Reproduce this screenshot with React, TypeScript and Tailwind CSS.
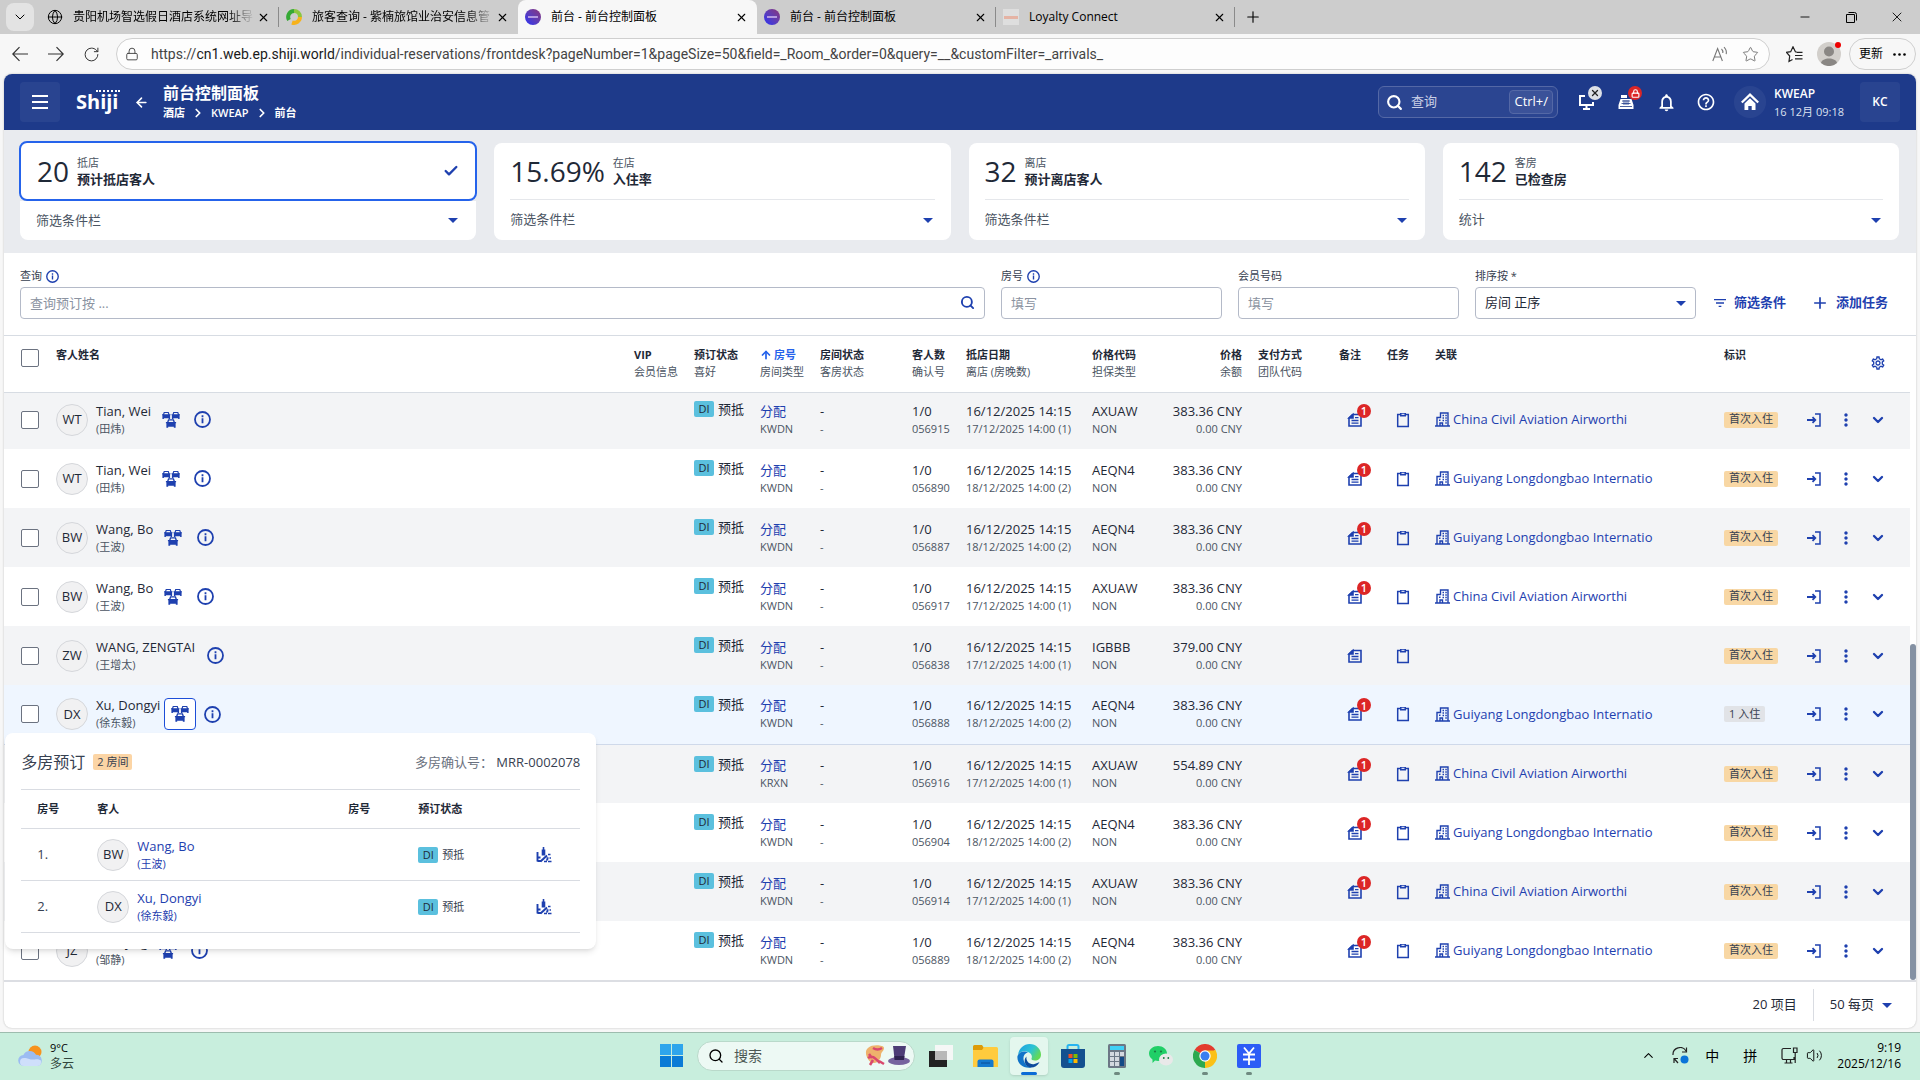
import type { ReactNode } from "react";
import { MdFilterList, MdAdd, MdHelpOutline, MdMoreVert, MdNotificationsNone, MdOutlineSettings } from "react-icons/md";
import {
  ArrowLeft,
  ArrowUp,
  Check,
  ChevronDown,
  ChevronRight,
  ChevronUp,
  Globe,
  Lock,
  Minus,
  Plus,
  RotateCw,
  Search,
  Star,
  Volume2,
  X,
} from "lucide-react";

/* ---------- icons ---------- */

const Caret = () => (
  <svg width="10" height="5" viewBox="0 0 10 5" className="shrink-0 fill-[#1e40af]">
    <path d="M0 0h10L5 5z" />
  </svg>
);

const InfoIcon = ({ size }: { size: number }) => (
  <svg width={size} height={size} viewBox="0 0 17 17" fill="none" className="shrink-0 stroke-[#1e40af]" strokeWidth="1.8">
    <circle cx="8.5" cy="8.5" r="7.5" />
    <path d="M8.5 7.3v5M8.5 4.3v1.9" />
  </svg>
);

const CarShape = ({ transform }: { transform: string }) => (
  <path
    transform={transform}
    fillRule="evenodd"
    d="M1.800 0h4.900l.8 2.200h1v1.100h-.4V7H6.600V6.200H1.900V7H.4V3.300H0V2.200h1zM2.700 1l-.5 1.300h4.100L5.800 1z"
  />
);

const CarsIcon = () => (
  <svg width="18" height="16" viewBox="0 0 18 16" className="fill-[#1e40af]">
    <CarShape transform="translate(0 0)" />
    <CarShape transform="translate(9.500 0)" />
    <CarShape transform="translate(3.900 7.300) scale(1.200)" />
  </svg>
);

const NotesIcon = () => (
  <svg width="16" height="16" viewBox="0 0 16 16" fill="none" className="stroke-[#1e40af]" strokeWidth="1.600">
    <path d="M5.500 2.500H14v11.500H2V6z" />
    <path d="M6 2.500v3.500H2z" className="fill-[#1e40af]" />
    <path d="M4.500 8.500h7M4.500 11.200h7M8 5.700h3.500" strokeWidth="1.300" />
  </svg>
);

const ClipboardIcon = () => (
  <svg width="16" height="16" viewBox="0 0 16 16" fill="none" className="stroke-[#1e40af]" strokeWidth="1.500">
    <path d="M2.700 2.500h10.600v12H2.700z" />
    <path d="M5 1h6v3.500H5z" className="fill-[#1e40af]" stroke="none" />
    <path d="M6.500 2.300h3" className="stroke-white" strokeWidth="1" />
  </svg>
);

const CompanyIcon = () => (
  <svg width="15" height="15" viewBox="0 0 15 15" fill="none" className="shrink-0 stroke-[#1e40af]" strokeWidth="1.400">
    <path d="M0 14h15M2 14V5.500h3.500V1H13v13M5 14v-3h2.500v3" />
    <path d="M7.500 3.500h1.500M10.300 3.500h1.500M7.500 6h1.500M10.300 6h1.500M4 8.300h1.500M7.500 8.500h1.500M10.300 8.500h1.500M10.300 11h1.500" />
  </svg>
);

const CheckInIcon = () => (
  <svg width="16" height="16" viewBox="0 0 16 16" fill="none" className="stroke-[#1e40af]" strokeWidth="1.500">
    <path d="M9 2h5v12H9" />
    <path d="M1 8h8M6.500 5.200 9.300 8l-2.800 2.800" strokeWidth="1.800" />
  </svg>
);

const SeatIcon = () => (
  <svg width="16" height="16" viewBox="0 0 16 16" fill="none" className="stroke-[#1e40af]" strokeWidth="1.600">
    <path d="M7.500 0v3" />
    <path d="M7.500 2.500v6" strokeWidth="3.600" />
    <path d="M1.500 5v9.500M1.500 10.500h3M1.500 14h3.500" strokeWidth="1.900" />
    <path d="M4.500 14.500 11 8.500" strokeWidth="2" />
    <path d="M12 7.500h2.500M10.500 11h2M13.500 11h1.500M8 14.500h3M12 14.500h3.500M10.500 13.500l1.500-2" />
  </svg>
);

const WeatherIcon = () => (
  <svg width="26" height="22" viewBox="0 0 26 22">
    <circle cx="17" cy="7" r="6.500" fill="#f7931e" />
    <path d="M6 21a5.500 5.500 0 0 1-.6-11A7 7 0 0 1 18 9.800a5.700 5.700 0 0 1 1.500 11.200z" fill="#9cbcf2" />
    <path d="M6 21a4 4 0 0 1 0-8c4 0 5 1.500 8 1.500 4 0 6-1 9 1a4 4 0 0 1-3.500 5.500z" fill="#cfdffb" />
  </svg>
);

const EdgeLogo = () => (
  <svg width="24" height="24" viewBox="0 0 24 24">
    <defs>
      <linearGradient id="edgeTop" x1="0" y1="0" x2="1" y2="0.500">
        <stop offset="0" stopColor="#1b9de2" />
        <stop offset="0.600" stopColor="#2cc3d5" />
        <stop offset="1" stopColor="#62d957" />
      </linearGradient>
    </defs>
    <path d="M1 11C2 4 7 0 12.500 0 19 0 24 5 24 10.500c0 4-3 6-6 6-2.500 0-4-1-3.500-2 .8-1.500.5-4.500-2.500-6C8 6.500 3 7 1 11z" fill="url(#edgeTop)" />
    <path d="M.5 12C2 7.500 7.500 6.500 11 8.200c-4 1.300-5.500 5-4 9 1.200 3.300 4 5.800 7.500 6.300C6 25-.5 19 .5 12z" fill="#1173c8" />
    <path d="M9.500 12.500c-1 5 3.500 8.500 8 7.500 2-.4 3.800-1.500 5-1.700-2 3.700-5.500 5.400-9 5.200-5-.8-8-7-4-11z" fill="#0c4a9c" />
  </svg>
);

const ChromeLogo = () => (
  <svg width="24" height="24" viewBox="0 0 24 24">
    <path d="M12 12 1.600 6A12 12 0 0 1 22.400 6z" fill="#e33b2e" />
    <path d="M12 12 22.400 6A12 12 0 0 1 12 24z" fill="#fbc116" />
    <path d="M12 12v12A12 12 0 0 1 1.600 6z" fill="#2da94f" />
    <path d="M12 6.500h10.700L17 15z" fill="#fbc116" />
    <circle cx="12" cy="12" r="5.700" fill="#fff" />
    <circle cx="12" cy="12" r="4.500" fill="#3a7ef0" />
  </svg>
);

/* ---------- browser chrome ---------- */

const ShijiFavicon = () => (
  <span className="flex size-4 items-center justify-center rounded-full bg-linear-to-tr from-[#2429f5] to-[#8a2f78]">
    <span className="h-0.5 w-2.5 bg-[#b49ae0]" />
  </span>
);

type TabProps = { title: string; icon: ReactNode; active?: boolean; divider?: boolean; faded?: boolean };

const Tab = ({ title, icon, active, divider, faded }: TabProps) => (
  <div className={`flex h-full w-[239px] items-center pl-[7px] ${active ? "rounded-t-lg bg-[#f7f7f7]" : ""}`}>
    <span className="flex size-4 shrink-0 items-center justify-center">{icon}</span>
    <span className={`ml-2.5 w-[182px] text-xs whitespace-nowrap text-black ${faded ? "mask-r-from-85%" : ""}`}>{title}</span>
    <button aria-label="关闭标签页" className="flex size-4 shrink-0 items-center justify-center">
      <X size={13} strokeWidth={2} />
    </button>
    {divider && <span className="ml-auto h-5 w-px bg-[#8a8a8a]" />}
  </div>
);

const TabBar = () => (
  <div className="flex h-[34px] items-center bg-[#cdcdcd]">
    <button aria-label="标签页菜单" className="mr-1.5 ml-1.5 flex size-7 items-center justify-center rounded-lg bg-[#e3e3e3]">
      <ChevronDown size={16} strokeWidth={1.500} />
    </button>
    <Tab title="贵阳机场智选假日酒店系统网址导" icon={<Globe size={16} strokeWidth={1.500} />} divider faded />
    <Tab
      title="旅客查询 - 紫楠旅馆业治安信息管"
      icon={
        <svg width="16" height="16" viewBox="0 0 16 16" fill="none" strokeWidth="4">
          <path d="M3 11A6 6 0 0 1 8 2" stroke="#35a935" />
          <path d="M8 2a6 6 0 0 1 6 6" stroke="#8cc63f" />
          <path d="M14 8a6 6 0 0 1-8 5.500" stroke="#f7b21b" />
        </svg>
      }
      faded
    />
    <Tab title="前台 - 前台控制面板" icon={<ShijiFavicon />} active />
    <Tab title="前台 - 前台控制面板" icon={<ShijiFavicon />} divider />
    <Tab
      title="Loyalty Connect"
      icon={
        <span className="flex size-4 items-center justify-center bg-[#dedede]">
          <span className="h-[3px] w-3.5 bg-[#e5b3a4]" />
        </span>
      }
      divider
    />
    <button aria-label="新建标签页" className="ml-1.5 flex size-6 items-center justify-center">
      <Plus size={18} strokeWidth={1.500} />
    </button>
    <div className="ml-auto flex">
      <button aria-label="最小化" className="flex w-[46px] items-center justify-center">
        <Minus size={14} strokeWidth={1.500} />
      </button>
      <button aria-label="还原" className="flex w-[46px] items-center justify-center">
        <svg width="11" height="11" viewBox="0 0 11 11" fill="none" stroke="#000">
          <path d="M.5 2.500h8v8h-8zM2.500.5h6a2 2 0 0 1 2 2v6" />
        </svg>
      </button>
      <button aria-label="关闭" className="flex w-[46px] items-center justify-center">
        <X size={16} strokeWidth={1.300} />
      </button>
    </div>
  </div>
);

const AddressBar = () => (
  <div className="flex h-10 items-center bg-[#f7f7f7] pr-1">
    <div className="flex w-28 items-center justify-between pr-3 pl-3 text-[#333]">
      <button aria-label="后退">
        <svg width="16" height="16" viewBox="0 0 16 16" fill="none" stroke="currentColor" strokeWidth="1.200">
          <path d="M16 8H.8M7.500 1.200.8 8l6.700 6.800" />
        </svg>
      </button>
      <button aria-label="前进">
        <svg width="16" height="16" viewBox="0 0 16 16" fill="none" stroke="currentColor" strokeWidth="1.200">
          <path d="M0 8h15.200M8.500 1.200 15.200 8l-6.700 6.800" />
        </svg>
      </button>
      <button aria-label="刷新">
        <RotateCw size={17} strokeWidth={1.400} />
      </button>
    </div>
    <div className="ml-1 flex h-8 flex-1 items-center rounded-full border border-[#cfcfcf] bg-[#fdfdfd] pr-2.5 pl-2 text-[#444]">
      <Lock size={14} strokeWidth={1.600} className="mr-3 shrink-0" />
      <p className="flex-1 font-[Roboto,sans-serif] text-sm">
        https://<span className="text-[#1a1a1a]">cn1.web.ep.shiji.world</span>
        /individual-reservations/frontdesk?pageNumber=1&pageSize=50&field=_Room_&order=0&query=__&customFilter=_arrivals_
      </p>
      <button aria-label="大声朗读" className="mr-3.5">
        <svg width="16" height="16" viewBox="0 0 16 16" fill="none" stroke="#777" strokeWidth="1.100">
          <path d="M.8 15 5.600 2.500 10.400 15M2.400 11h6.400M9.500 3a4.500 4.500 0 0 1 1.300 4M12 1.200a7.500 7.500 0 0 1 2.200 7" />
        </svg>
      </button>
      <button aria-label="收藏">
        <Star size={17} strokeWidth={1.200} className="text-[#666]" />
      </button>
    </div>
    <button aria-label="收藏夹" className="ml-4">
      <svg width="17" height="17" viewBox="0 0 17 17" fill="none" stroke="#222" strokeWidth="1.200">
        <path d="M11 6.200 9.400 5.700 7 .8 4.700 5.700l-4.200.6L3.700 10 3 15.500l3.500-2M9 9.500h7.500M11 6.300h5.500M9 12.800h7.500" />
      </svg>
    </button>
    <button aria-label="个人资料" className="relative ml-3.5 size-6">
      <svg width="24" height="24" viewBox="0 0 24 24">
        <circle cx="12" cy="12" r="12" fill="#d2cfcb" />
        <circle cx="12" cy="9.500" r="5" fill="#8a8784" />
        <path d="M4 21c1-6 15-6 16 0a12 12 0 0 1-16 0z" fill="#8a8784" />
      </svg>
      <span className="absolute top-0 right-0 size-1.5 rounded-full bg-[#e00]" />
    </button>
    <button className="ml-2 flex h-8 items-center gap-2.5 rounded-full border border-[#cfcfcf] px-[9px] text-xs text-black">
      更新
      <svg width="13" height="3" viewBox="0 0 13 3">
        <circle cx="1.500" cy="1.500" r="1.300" />
        <circle cx="6.500" cy="1.500" r="1.300" />
        <circle cx="11.500" cy="1.500" r="1.300" />
      </svg>
    </button>
  </div>
);

/* ---------- app header ---------- */

const AppHeader = () => (
  <header className="flex h-14 items-center rounded-t-lg bg-[#1e3a8a] px-4 text-white">
    <button aria-label="菜单" className="flex size-10 items-center justify-center rounded bg-white/5">
      <svg width="16" height="14" viewBox="0 0 16 14" fill="#fff">
        <path d="M0 0h16v2H0zM0 6h16v2H0zM0 12h16v2H0z" />
      </svg>
    </button>
    <a href="#home" className="relative ml-4 w-12 text-xl leading-6 font-bold">
      Shiji
      <span className="absolute top-0 left-5 w-6 border-t-2 border-dotted border-white" />
    </a>
    <button aria-label="返回" className="ml-2.5">
      <ArrowLeft size={15} strokeWidth={2.500} />
    </button>
    <div className="ml-3.5">
      <h1 className="text-base leading-[22px] font-bold">前台控制面板</h1>
      <nav className="flex items-center gap-1.5 text-[11px] leading-[18px] font-semibold">
        <a href="#hotel">酒店</a>
        <ChevronRight size={14} strokeWidth={3} />
        <a href="#kweap">KWEAP</a>
        <ChevronRight size={14} strokeWidth={3} />
        <a href="#frontdesk">前台</a>
      </nav>
    </div>
    <label className="ml-auto flex h-8 w-[180px] items-center rounded-md border border-[#5468a6] bg-[#2b4591] pr-1 pl-[7px]">
      <Search size={17} strokeWidth={3} />
      <input aria-label="查询" placeholder="查询" className="ml-2 w-0 flex-1 text-[13px] placeholder-[#c9d0e6] outline-none" />
      <kbd className="flex h-6 items-center rounded border border-[#5468a6] bg-[#3b5299] px-1 font-[inherit] text-[13px]">Ctrl+/</kbd>
    </label>
    <div className="ml-4 flex items-center gap-4">
      <button aria-label="终端" className="relative flex size-6 items-center justify-center">
        <svg width="18" height="18" viewBox="0 0 18 18" fill="none" stroke="#fff" strokeWidth="2">
          <path d="M8 3H3v9h13v-3M9.500 12v4M6 16h7" />
        </svg>
        <span className="absolute -top-1 left-3.5 flex size-3.5 items-center justify-center rounded-full bg-[#dde0e6] text-[#222]">
          <X size={10} strokeWidth={3} />
        </span>
      </button>
      <button aria-label="收银" className="relative flex size-6 items-center justify-center">
        <svg width="16" height="16" viewBox="0 0 16 16">
          <path d="M3 1h6v3H3zM2.500 5h11L15.500 11v4H.5v-4z" fill="#fff" />
          <path d="M4 7h8M3.500 9.500h9M6 6v5M8 6v5M10 6v5M2 12.500h12" stroke="#1e3a8a" strokeWidth=".8" />
        </svg>
        <span className="absolute -top-1 left-3.5 flex size-3.5 items-center justify-center rounded-full bg-[#dc2626]">
          <Lock size={9} strokeWidth={3} />
        </span>
      </button>
      <button aria-label="通知" className="flex size-6 items-center justify-center">
        <MdNotificationsNone size={21} />
      </button>
      <button aria-label="帮助" className="flex size-6 items-center justify-center">
        <MdHelpOutline size={20} />
      </button>
    </div>
    <div className="ml-4 flex items-center gap-2">
      <span className="flex size-8 items-center justify-center rounded-full bg-white/5">
        <svg width="18" height="18" viewBox="0 0 18 18">
          <path d="M9 0 18 8.700l-1.600 1.600L9 3.200l-7.400 7.100L0 8.700zM9 5.300l5.500 5.200V17h-3.800v-4H7.300v4H3.500v-6.500z" fill="#fff" />
        </svg>
      </span>
      <div className="pt-0.5">
        <p className="text-xs leading-[18px] font-semibold">KWEAP</p>
        <p className="text-[11px] leading-[18px] text-[#dbe1f0]">16 12月 09:18</p>
      </div>
    </div>
    <button className="ml-4 size-10 rounded bg-white/5 text-xs font-semibold">KC</button>
  </header>
);

/* ---------- summary cards ---------- */

const cards = [
  { value: "20", label: "抵店", title: "预计抵店客人", footer: "筛选条件栏", selected: true },
  { value: "15.69%", label: "在店", title: "入住率", footer: "筛选条件栏" },
  { value: "32", label: "离店", title: "预计离店客人", footer: "筛选条件栏" },
  { value: "142", label: "客房", title: "已检查房", footer: "统计" },
];

const Cards = () => (
  <section className="grid grid-cols-4 gap-[18px] bg-[#e9ebef] pt-[11px] pr-[17px] pb-[13px] pl-4">
    {cards.map((card) => (
      <div key={card.value} className={`flex flex-col ${card.selected ? "" : "pt-0.5"}`}>
        <button
          className={`flex items-center bg-white text-left ${
            card.selected ? "-mx-px h-[60px] rounded-lg border-2 border-[#2563eb] pr-4 pl-4" : "h-14 rounded-t-lg px-4"
          }`}
        >
          <span className="text-[28px] leading-8 text-[#1f2937]">{card.value}</span>
          <span className="ml-2 flex flex-col">
            <span className="text-[11px] leading-[17px] text-[#4b5563]">{card.label}</span>
            <span className="text-[13px] leading-[17px] font-bold text-[#1f2937]">{card.title}</span>
          </span>
          {card.selected && <Check size={16} strokeWidth={3.500} className="ml-auto text-[#1e40af]" />}
        </button>
        <div className="flex-1 rounded-b-lg bg-white px-4">
          <button
            className={`flex w-full items-center justify-between pr-0.5 text-[13px] text-[#4b5563] ${
              card.selected ? "h-[39px]" : "h-[41px] border-t border-[#e5e7eb]"
            }`}
          >
            {card.footer}
            <Caret />
          </button>
        </div>
      </div>
    ))}
  </section>
);

/* ---------- filters ---------- */

const fieldLabel = "flex h-[18px] items-center gap-1 text-[11px] text-[#374151]";
const fieldBox = "mt-0.5 h-8 w-full rounded border border-[#b4bac8] bg-white px-[9px] text-[13px] text-[#1f2937] placeholder-[#8b93a1]";

const Filters = () => (
  <section className="flex items-end px-4 pt-3.5 pb-4">
    <div className="flex-1">
      <label htmlFor="query" className={fieldLabel}>
        查询 <InfoIcon size={13} />
      </label>
      <div className="relative">
        <input id="query" placeholder="查询预订按 ..." className={fieldBox} />
        <Search size={15} strokeWidth={3} className="absolute top-2.5 right-2.5 text-[#1e40af]" />
      </div>
    </div>
    <div className="ml-4 w-[221px]">
      <label htmlFor="room" className={fieldLabel}>
        房号 <InfoIcon size={13} />
      </label>
      <input id="room" placeholder="填写" className={fieldBox} />
    </div>
    <div className="ml-4 w-[221px]">
      <label htmlFor="member" className={fieldLabel}>
        会员号码
      </label>
      <input id="member" placeholder="填写" className={fieldBox} />
    </div>
    <div className="ml-4 w-[221px]">
      <label htmlFor="sort" className={fieldLabel}>
        排序按 *
      </label>
      <div className="relative">
        <select id="sort" className={`${fieldBox} appearance-none`}>
          <option>房间 正序</option>
          <option>房间 倒序</option>
        </select>
        <span className="pointer-events-none absolute top-4 right-2.5">
          <Caret />
        </span>
      </div>
    </div>
    <button className="ml-4 flex h-8 items-center gap-1.5 text-[13px] font-bold text-[#1e40af]">
      <MdFilterList size={16} />
      筛选条件
    </button>
    <button className="mr-3 ml-6 flex h-8 items-center gap-1.5 text-[13px] font-bold text-[#1e40af]">
      <MdAdd size={20} />
      添加任务
    </button>
  </section>
);

/* ---------- reservations table ---------- */

type Reservation = {
  initials?: string;
  name?: string;
  localName?: string;
  single?: boolean;
  open?: boolean;
  roomType?: string;
  confirmation: string;
  departure: string;
  rate: string;
  price?: string;
  company?: string;
  stays?: string;
};

const CAAC = "China Civil Aviation Airworthi";
const GLIA = "Guiyang Longdongbao Internatio";
const ONE_NIGHT = "17/12/2025 14:00 (1)";
const TWO_NIGHTS = "18/12/2025 14:00 (2)";

const reservations: Reservation[] = [
  { initials: "WT", name: "Tian, Wei", localName: "田炜", confirmation: "056915", departure: ONE_NIGHT, rate: "AXUAW", company: CAAC },
  { initials: "WT", name: "Tian, Wei", localName: "田炜", confirmation: "056890", departure: TWO_NIGHTS, rate: "AEQN4", company: GLIA },
  { initials: "BW", name: "Wang, Bo", localName: "王波", confirmation: "056887", departure: TWO_NIGHTS, rate: "AEQN4", company: GLIA },
  { initials: "BW", name: "Wang, Bo", localName: "王波", confirmation: "056917", departure: ONE_NIGHT, rate: "AXUAW", company: CAAC },
  { initials: "ZW", name: "WANG, ZENGTAI", localName: "王增太", single: true, confirmation: "056838", departure: ONE_NIGHT, rate: "IGBBB", price: "379.00" },
  { initials: "DX", name: "Xu, Dongyi", localName: "徐东毅", open: true, confirmation: "056888", departure: TWO_NIGHTS, rate: "AEQN4", company: GLIA, stays: "1 入住" },
  { confirmation: "056916", departure: ONE_NIGHT, rate: "AXUAW", company: CAAC, roomType: "KRXN", price: "554.89" },
  { confirmation: "056904", departure: TWO_NIGHTS, rate: "AEQN4", company: GLIA },
  { confirmation: "056914", departure: ONE_NIGHT, rate: "AXUAW", company: CAAC },
  { initials: "JZ", name: "Zou, Jing", localName: "邹静", confirmation: "056889", departure: TWO_NIGHTS, rate: "AEQN4", company: GLIA },
];

const Avatar = ({ children }: { children: ReactNode }) => (
  <span className="flex size-8 shrink-0 items-center justify-center rounded-full border border-[#d5d7db] bg-[#f1f1f2] text-[13px] text-[#1f2937]">
    {children}
  </span>
);

const Checkbox = ({ label }: { label: string }) => (
  <input
    type="checkbox"
    aria-label={label}
    className="block size-[18px] appearance-none rounded-xs border border-[#6b7280] bg-white"
  />
);

const StatusChip = () => (
  <span className="flex h-4 w-5 items-center justify-center rounded-xs bg-[#5bc0de] text-[11px] text-[#1f2937]">DI</span>
);

const TwoLines = ({ top, bottom }: { top: ReactNode; bottom: ReactNode }) => (
  <>
    <p className="text-[13px] leading-[18px] text-[#1f2937]">{top}</p>
    <p className="text-[11px] leading-[18px] text-[#4b5563]">{bottom}</p>
  </>
);

const HeadCell = ({ top, bottom, className = "" }: { top: ReactNode; bottom?: string; className?: string }) => (
  <th className={`bg-white pt-2.5 text-left align-top text-[11px] leading-[17px] whitespace-nowrap ${className}`}>
    <p className="font-bold text-[#1f2937]">{top}</p>
    {bottom && <p className="font-normal text-[#4b5563]">{bottom}</p>}
  </th>
);

const groupGuests = [
  { no: "1.", initials: "BW", name: "Wang, Bo", localName: "王波" },
  { no: "2.", initials: "DX", name: "Xu, Dongyi", localName: "徐东毅" },
];

const MultiRoomPopup = () => (
  <div className="absolute top-[35px] -left-[159px] z-20 w-[591px] rounded-lg bg-white px-4 pb-4 shadow-md">
    <div className="flex h-14 items-center pt-0.5">
      <h2 className="text-base text-[#374151]">多房预订</h2>
      <span className="ml-2 rounded-xs bg-[#fcd5a5] px-1 text-[11px] leading-4 text-[#374151]">2 房间</span>
      <p className="ml-auto text-[13px] text-[#6b7280]">
        多房确认号： <span className="text-[#374151]">MRR-0002078</span>
      </p>
    </div>
    <table className="w-full table-fixed border-t border-[#d9dce2] text-left">
      <thead>
        <tr className="h-[39px] border-b border-[#d9dce2] text-[11px] text-[#1f2937]">
          <th className="w-[76px] pl-4">房号</th>
          <th>客人</th>
          <th className="w-[70px]">房号</th>
          <th className="w-[118px]">预订状态</th>
          <th className="w-11" />
        </tr>
      </thead>
      <tbody>
        {groupGuests.map((guest) => (
          <tr key={guest.no} className="h-[52px] border-b border-[#d9dce2]">
            <td className="pl-4 text-[13px] text-[#374151]">{guest.no}</td>
            <td>
              <a href="#guest" className="flex items-center gap-2 text-[#1e40af]">
                <Avatar>{guest.initials}</Avatar>
                <span className="flex flex-col text-[13px] leading-[18px]">
                  {guest.name}
                  <span className="text-[11px]">({guest.localName})</span>
                </span>
              </a>
            </td>
            <td />
            <td>
              <span className="flex items-center gap-1 text-[11px] text-[#374151]">
                <StatusChip />
                预抵
              </span>
            </td>
            <td>
              <button aria-label="换房" className="flex">
                <SeatIcon />
              </button>
            </td>
          </tr>
        ))}
      </tbody>
    </table>
  </div>
);

const GuestCell = ({ row }: { row: Reservation }) => {
  if (!row.name) return null;
  return (
    <div className="flex items-center">
      <Avatar>{row.initials}</Avatar>
      <div className="mr-1 ml-2">
        <TwoLines top={row.name} bottom={`(${row.localName})`} />
      </div>
      {!row.single && (
        <div className="relative">
          <button
            aria-label="多房预订"
            className={`flex size-8 items-center justify-center rounded ${row.open ? "border border-[#1d4ed8] bg-white" : ""}`}
          >
            <CarsIcon />
          </button>
          {row.open && <MultiRoomPopup />}
        </div>
      )}
      <button aria-label="客人信息" className="flex size-8 items-center justify-center">
        <InfoIcon size={17} />
      </button>
    </div>
  );
};

const ReservationRow = ({ row }: { row: Reservation }) => (
  <tr className={`h-[59px] whitespace-nowrap ${row.open ? "border-b border-[#cfd9ea] bg-[#eff6ff]" : "odd:bg-[#f3f4f6] even:bg-white"}`}>
    <td className="pl-[17px]">
      <Checkbox label={`选择 ${row.confirmation}`} />
    </td>
    <td>
      <GuestCell row={row} />
    </td>
    <td />
    <td className="pt-[11px] align-top">
      <span className="flex items-center gap-1 text-[13px] leading-4 text-[#1f2937]">
        <StatusChip />
        预抵
      </span>
    </td>
    <td>
      <TwoLines top={<a href="#assign" className="text-[#1e40af]">分配</a>} bottom={row.roomType ?? "KWDN"} />
    </td>
    <td>
      <TwoLines top="-" bottom="-" />
    </td>
    <td>
      <TwoLines top="1/0" bottom={row.confirmation} />
    </td>
    <td>
      <TwoLines top="16/12/2025 14:15" bottom={row.departure} />
    </td>
    <td>
      <TwoLines top={row.rate} bottom="NON" />
    </td>
    <td className="pr-4 text-right">
      <TwoLines top={`${row.price ?? "383.36"} CNY`} bottom="0.00 CNY" />
    </td>
    <td />
    <td className="pl-2">
      <button aria-label="备注" className="relative flex">
        <NotesIcon />
        {row.company && (
          <span className="absolute -top-2 left-2.5 flex size-3.5 items-center justify-center rounded-full bg-[#dc2626] text-[11px] leading-none font-semibold text-white">
            1
          </span>
        )}
      </button>
    </td>
    <td className="pl-2">
      <button aria-label="任务" className="flex">
        <ClipboardIcon />
      </button>
    </td>
    <td>
      {row.company && (
        <a href="#company" className="flex items-center gap-[3px] text-[13px] text-[#1e40af]">
          <CompanyIcon />
          {row.company}
        </a>
      )}
    </td>
    <td>
      <span
        className={`flex h-4 w-fit items-center rounded-xs px-[5px] text-[11px] text-[#374151] ${
          row.stays ? "bg-[#e1e3e7]" : "bg-[#f8d7a4]"
        }`}
      >
        {row.stays ?? "首次入住"}
      </span>
    </td>
    <td>
      <div className="flex items-center justify-between pr-6 pl-0.5 text-[#1e40af]">
        <button aria-label="办理入住">
          <CheckInIcon />
        </button>
        <button aria-label="更多">
          <MdMoreVert size={20} />
        </button>
        <button aria-label="展开">
          <ChevronDown size={16} strokeWidth={3.500} />
        </button>
      </div>
    </td>
  </tr>
);

const ReservationTable = () => (
  <section className="flex border-t border-[#d7dce3]">
    <table className="w-full flex-1 table-fixed">
      <thead className="relative bg-white shadow-[0_2px_0_#ffffff,0_3px_0_#d7dce3]">
        <tr className="h-[54px]">
          <th className="w-[52px] bg-white pt-[13px] pl-[17px] align-top">
            <Checkbox label="全选" />
          </th>
          <HeadCell top="客人姓名" />
          <HeadCell top="VIP" bottom="会员信息" className="w-[60px]" />
          <HeadCell top="预订状态" bottom="喜好" className="w-[66px]" />
          <HeadCell
            top={
              <button className="flex items-center gap-0.5 text-[#2563eb]">
                <ArrowUp size={12} strokeWidth={3.500} />
                房号
              </button>
            }
            bottom="房间类型"
            className="w-[60px]"
          />
          <HeadCell top="房间状态" bottom="客房状态" className="w-[92px]" />
          <HeadCell top="客人数" bottom="确认号" className="w-[54px]" />
          <HeadCell top="抵店日期" bottom="离店 (房晚数)" className="w-[126px]" />
          <HeadCell top="价格代码" bottom="担保类型" className="w-[68px]" />
          <HeadCell top="价格" bottom="余额" className="w-[98px] pr-4 !text-right" />
          <HeadCell top="支付方式" bottom="团队代码" className="w-[81px]" />
          <HeadCell top="备注" className="w-12" />
          <HeadCell top="任务" className="w-12" />
          <HeadCell top="关联" className="w-[289px]" />
          <HeadCell top="标识" className="w-20" />
          <th className="w-[106px] bg-white pr-6 align-middle">
            <button aria-label="设置" className="ml-auto block text-[#1e40af]">
              <MdOutlineSettings size={16} />
            </button>
          </th>
        </tr>
      </thead>
      <tbody>
        {reservations.map((row) => (
          <ReservationRow key={row.confirmation} row={row} />
        ))}
      </tbody>
    </table>
    <div className="flex w-1.5 items-end">
      <div className="h-[336px] w-full rounded-full bg-[#8491a3]" />
    </div>
  </section>
);

const TableFooter = () => (
  <footer className="flex flex-1 items-center justify-end border-t-2 border-[#dcdee3] pr-6 text-[13px] text-[#1f2937]">
    <span>20 项目</span>
    <span className="mx-4 h-8 w-px bg-[#d9dce2]" />
    <button className="flex items-center gap-2">
      50 每页
      <Caret />
    </button>
  </footer>
);

/* ---------- windows taskbar ---------- */

const TaskItem = ({ label, active, running, children }: { label: string; active?: boolean; running?: boolean; children: ReactNode }) => (
  <button
    aria-label={label}
    className={`relative mx-[3px] flex h-[38px] w-[38px] items-center justify-center rounded ${active ? "bg-white/50 shadow-sm" : ""}`}
  >
    {children}
    {active && <span className="absolute bottom-0 h-[3px] w-4 rounded-full bg-[#0a6cd6]" />}
    {running && <span className="absolute bottom-0 h-[3px] w-1.5 rounded-full bg-[#6f8a80]" />}
  </button>
);

const Taskbar = () => (
  <div className="grid h-12 grid-cols-[1fr_auto_1fr] items-center border-t border-[#9dbcae] bg-[#c8eedd] pb-0.5 text-black">
    <button className="flex items-center gap-1.5 pl-[18px] text-left text-[11px] leading-4">
      <WeatherIcon />
      <span>
        9°C
        <br />
        <span className="text-xs text-[#33473e]">多云</span>
      </span>
    </button>
    <div className="flex items-center">
      <TaskItem label="开始">
        <svg width="23" height="23" viewBox="0 0 23 23">
          <path d="M0 0h11v11H0zM12 0h11v11H12z" fill="#2ea5ec" />
          <path d="M0 12h11v11H0zM12 12h11v11H12z" fill="#0a7bd6" />
        </svg>
      </TaskItem>
      <label className="mx-1 flex h-[30px] w-[218px] items-center rounded-full border border-[#b9d9ca] bg-[#edf9f4] pr-1 pl-2.5">
        <Search size={16} strokeWidth={2} />
        <input aria-label="搜索" placeholder="搜索" className="ml-2.5 w-0 flex-1 text-sm placeholder-[#4c5853] outline-none" />
        <svg width="46" height="22" viewBox="0 0 46 22">
          <path d="M4 3C8-1 20 0 20 3c0 3-3 4-3 7s-3 9-8 8S-1 7 4 3z" fill="#eeb26c" />
          <path d="M9 3c3 2 6 2 9 0M5 9l3 4M4 13c4-3 6-1 12 5M15 16l5 3M9 15 6 20" stroke="#d9486e" strokeWidth="2.500" fill="none" />
          <ellipse cx="35" cy="16" rx="11" ry="4" fill="#77639f" />
          <path d="M29 1h13l-2.300 14h-9z" fill="#4d3d76" />
          <path d="M30.300 11h10.200l-.6 4h-9.200z" fill="#2f2450" />
        </svg>
      </label>
      <TaskItem label="任务视图">
        <svg width="24" height="22" viewBox="0 0 24 22">
          <path d="M6 0h18v15H6z" fill="#f5f7f6" />
          <path d="M0 6h18v16H0z" fill="#222" />
          <path d="M6 6h12v9H6z" fill="#b8b8b8" />
        </svg>
      </TaskItem>
      <TaskItem label="文件资源管理器">
        <svg width="25" height="22" viewBox="0 0 25 22">
          <path d="M0 1.500A1.500 1.500 0 0 1 1.500 0H9l2 3v3H0z" fill="#dd9b08" />
          <path d="M0 5h9l2-3h12.500A1.500 1.500 0 0 1 25 3.500V22H0z" fill="#ffcb3d" />
          <path d="M4.500 22v-5.500a2 2 0 0 1 2-2h12a2 2 0 0 1 2 2V22z" fill="#1479cf" />
          <path d="M8 18h9" stroke="#0b4f96" />
        </svg>
      </TaskItem>
      <TaskItem label="Microsoft Edge" active>
        <EdgeLogo />
      </TaskItem>
      <TaskItem label="Microsoft Store">
        <svg width="24" height="24" viewBox="0 0 24 24">
          <path d="M6.500 6V2.500A1.500 1.500 0 0 1 8 1h8a1.500 1.500 0 0 1 1.500 1.500V6" fill="none" stroke="#27b4f0" strokeWidth="2" />
          <path d="M0 5h24v16a3 3 0 0 1-3 3H3a3 3 0 0 1-3-3z" fill="#14508f" />
          <path d="M7.500 10h4v4h-4z" fill="#f25022" />
          <path d="M12.500 10h4v4h-4z" fill="#7fba00" />
          <path d="M7.500 15h4v4h-4z" fill="#00a4ef" />
          <path d="M12.500 15h4v4h-4z" fill="#ffb900" />
        </svg>
      </TaskItem>
      <TaskItem label="计算器" running>
        <svg width="18" height="24" viewBox="0 0 18 24">
          <rect width="18" height="24" rx="1.500" fill="#6c7785" />
          <path d="M2 2h14v4H2z" fill="#3fd0f5" />
          <path d="M2 8h4v4H2zM7 8h4v4H7zM12 8h4v4h-4zM2 13h4v4H2zM7 13h4v4H7zM2 18h4v4H2zM7 18h4v4H7z" fill="#d3d8df" />
          <path d="M12 13h4v9h-4z" fill="#144a86" />
        </svg>
      </TaskItem>
      <TaskItem label="微信">
        <svg width="24" height="20" viewBox="0 0 24 20">
          <path d="M9 0c5 0 9 3.400 9 7.500S14 15 9 15c-1 0-2-.1-3-.4L3.500 17v-3.500C1.500 12 0 10 0 7.500 0 3.400 4 0 9 0z" fill="#21cf67" />
          <ellipse cx="17" cy="13.500" rx="7" ry="6" fill="#e9e9e9" />
          <g fill="#1b7c43">
            <circle cx="6" cy="5.500" r="1.100" />
            <circle cx="12" cy="5.500" r="1.100" />
            <circle cx="14.800" cy="12" r=".9" />
            <circle cx="19.300" cy="12" r=".9" />
          </g>
        </svg>
      </TaskItem>
      <TaskItem label="Google Chrome" running>
        <ChromeLogo />
      </TaskItem>
      <TaskItem label="收款" running>
        <svg width="24" height="24" viewBox="0 0 24 24">
          <rect width="24" height="24" rx="2" fill="#2c5cf6" />
          <path d="M7 3.500l5 6 5-6M12 9.500V21M6 10.500h12M6 15.500h12" fill="none" stroke="#fff" strokeWidth="1.800" />
        </svg>
      </TaskItem>
    </div>
    <div className="flex items-center justify-end pr-[19px]">
      <button aria-label="显示隐藏的图标">
        <ChevronUp size={15} strokeWidth={1.700} />
      </button>
      <button aria-label="同步" className="ml-4">
        <svg width="17" height="17" viewBox="0 0 17 17" fill="none" stroke="#222" strokeWidth="1.200">
          <path d="M1 8a7 7 0 0 1 13-4M14.500.500V5H10M2 16v-4.500h4M2.500 12 6 16" />
          <circle cx="12.500" cy="12.500" r="4" fill="#0a74d9" stroke="none" />
        </svg>
      </button>
      <button className="ml-4 text-sm">中</button>
      <button className="ml-6 text-sm">拼</button>
      <button aria-label="网络和音量" className="ml-6 flex items-center gap-2">
        <svg width="17" height="17" viewBox="0 0 17 17" fill="none" stroke="#222" strokeWidth="1.200">
          <path d="M10 1.500H2.500a1.500 1.500 0 0 0-1.500 1.500v8A1.500 1.500 0 0 0 2.500 12.500H13V10M5.500 12.500V16M9.500 12.500V16M3.500 16h8M12.500 1h3.500v4.500h-3.500zM14.200 6v10" />
        </svg>
        <Volume2 size={17} strokeWidth={1.300} />
      </button>
      <button className="ml-3.5 text-right text-xs leading-4">
        9:19
        <br />
        2025/12/16
      </button>
    </div>
  </div>
);

export default function App() {
  return (
    <div className="flex min-h-screen flex-col bg-[#f7f7f7] font-['Open_Sans','Noto_Sans_CJK_SC',sans-serif]">
      <TabBar />
      <AddressBar />
      <main className="mx-1 mb-1 flex flex-1 flex-col rounded-lg bg-white shadow-[0_0_2px_#b5b5b5]">
        <AppHeader />
        <Cards />
        <Filters />
        <ReservationTable />
        <TableFooter />
      </main>
      <Taskbar />
    </div>
  );
}
